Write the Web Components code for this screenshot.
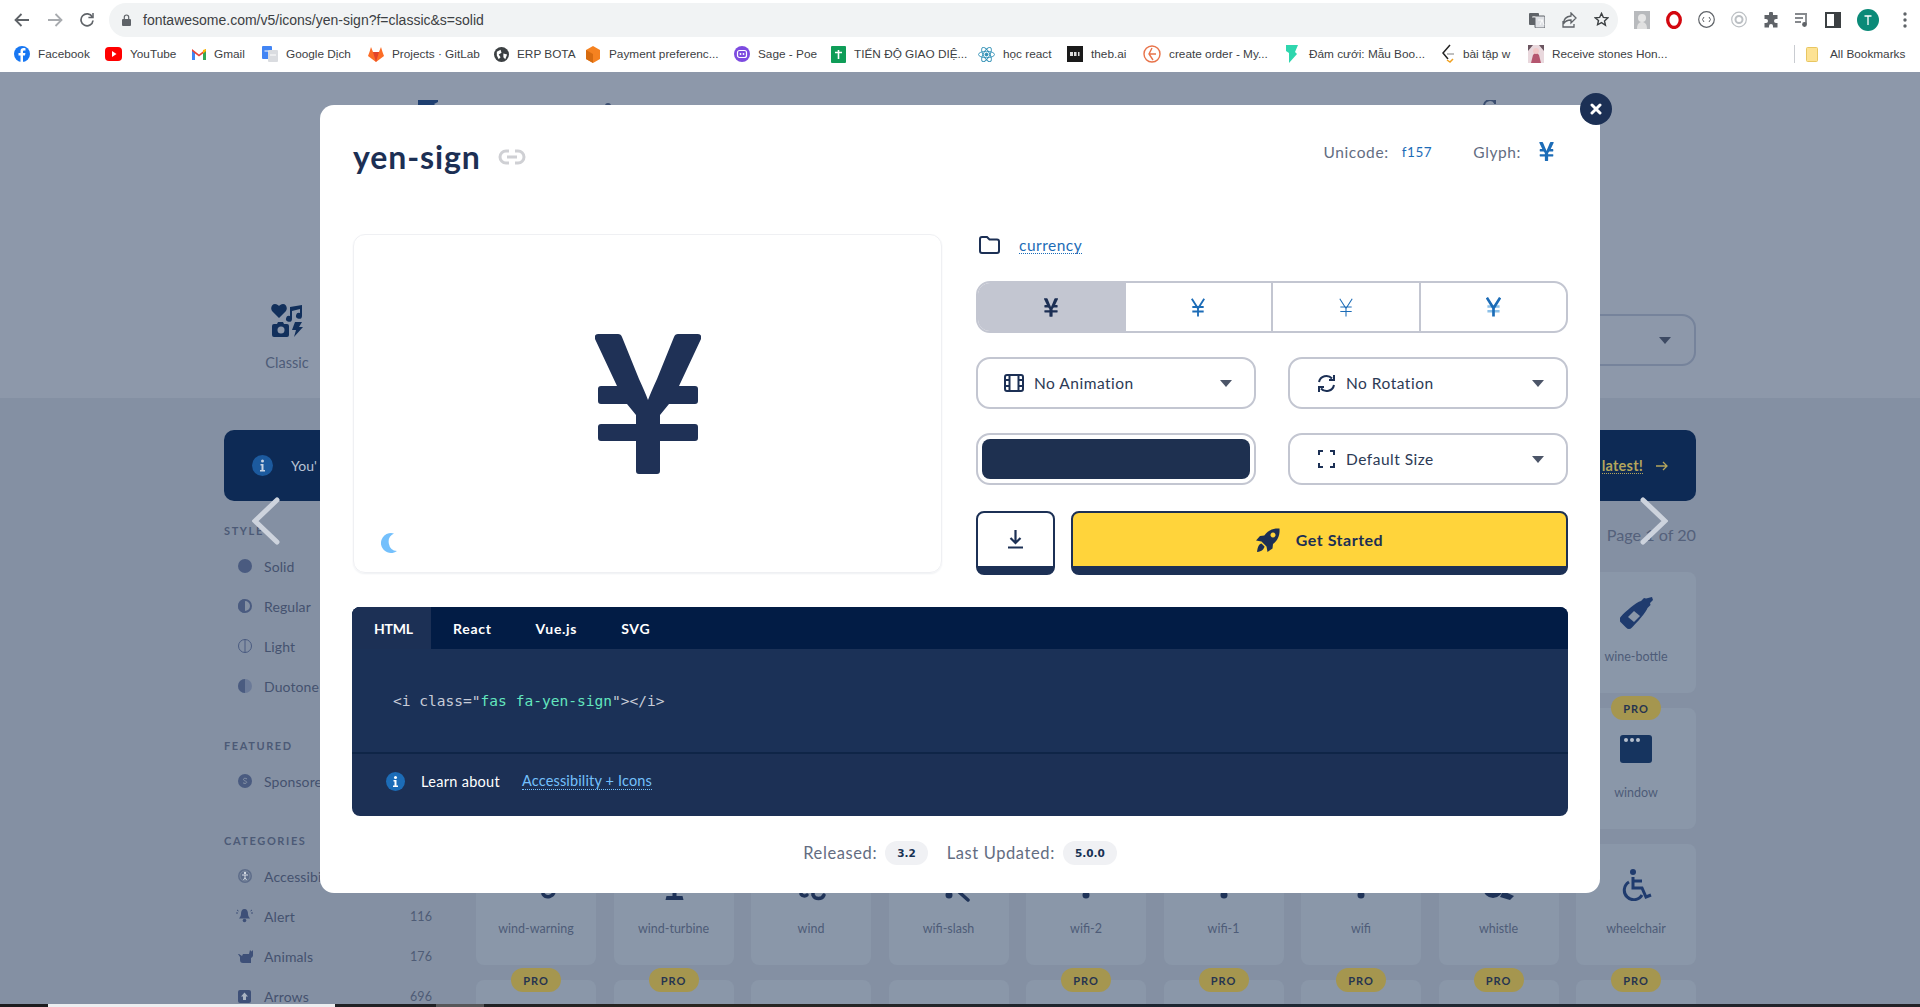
<!DOCTYPE html>
<html lang="en">
<head>
<meta charset="utf-8">
<title>yen-sign</title>
<style>
html,body{margin:0;height:100%;overflow:hidden;background:#8490a3}
body{display:flex;flex-direction:column;height:1007px;font-family:Lato,"Noto Sans",sans-serif}
</style>
</head>
<body>
<chrome-bar></chrome-bar>
<fa-page></fa-page>
<task-strip></task-strip>
<script>
const def=(name,html)=>customElements.define(name,class extends HTMLElement{
  constructor(){super();this.attachShadow({mode:'open'}).innerHTML=typeof html==='function'?html(this):html;}
});
const YEN='M3 0H23Q26 0 27 3L44 45Q50 58 53 66Q56 58 62 45L79 3Q80 0 83 0H103Q107 0 106 5L84 52H100Q103 52 103 55V67Q103 70 100 70H74L65 81V90H100Q103 90 103 93V104Q103 107 100 107H65V137Q65 140 62 140H44Q41 140 41 137V107H6Q3 107 3 104V93Q3 90 6 90H41V81L32 70H6Q3 70 3 67V55Q3 52 6 52H22L0 5Q-1 0 3 0Z';
const yenSolid=(w,h,c)=>`<svg width="${w}" height="${h}" viewBox="0 0 106 140" fill="${c}"><path d="${YEN}"/></svg>`;
const yenLine=(w,h,c,s)=>`<svg width="${w}" height="${h}" viewBox="0 0 106 140" fill="none" stroke="${c}" stroke-width="${s}"><path d="M6 4L53 78L100 4M10 66H96M10 100H96M53 78V138"/></svg>`;

/* ---------- browser chrome ---------- */
def('bm-item',`<style>:host{display:flex;align-items:center;flex:none;gap:8px;font:11.8px "Liberation Sans",Arial,sans-serif;color:#3c4043;white-space:nowrap}
::slotted(svg){flex:none}</style><slot name="i"></slot><slot></slot>`);

def('chrome-bar',`<style>
:host{display:block;flex:none;height:72px;background:#fff;box-sizing:border-box}
.top{display:flex;align-items:center;height:39px;padding-left:14px}
.nav{display:flex;align-items:center;gap:17px;width:95px;flex:none}
.omni{flex:none;width:1509px;height:34px;background:#f1f3f4;border-radius:17px;display:flex;align-items:center;padding-left:13px;box-sizing:border-box;font:14px "Liberation Sans",Arial,sans-serif;color:#3c4043;gap:12px}
.omni .end{margin-left:auto;display:flex;gap:17px;padding-right:9px;align-items:center}
.exts{display:flex;align-items:center;margin-left:16px;gap:16px}
.marks{display:flex;align-items:center;height:30px;padding-left:14px}
.sep{width:1px;height:18px;background:#c9ccd1;margin-right:11px;flex:none}
</style>
<div class="top">
 <div class="nav">
  <svg width="16" height="14" viewBox="0 0 16 14" fill="none" stroke="#5f6368" stroke-width="1.8"><path d="M15 7H2M7.5 1L1.5 7l6 6"/></svg>
  <svg width="16" height="14" viewBox="0 0 16 14" fill="none" stroke="#a8abaf" stroke-width="1.8"><path d="M1 7h13M8.5 1l6 6-6 6"/></svg>
  <svg width="14" height="15" viewBox="0 0 14 15" fill="none" stroke="#5f6368" stroke-width="1.7"><path d="M12.3 5A6 6 0 1 0 13 8.5"/><path d="M13 1v4.6H8.4" stroke-width="1.5"/></svg>
 </div>
 <div class="omni">
  <svg width="9" height="12" viewBox="0 0 9 12"><path d="M1 5h7a1 1 0 0 1 1 1v5a1 1 0 0 1-1 1H1a1 1 0 0 1-1-1V6a1 1 0 0 1 1-1z" fill="#5f6368"/><path d="M2.3 5V3.2a2.2 2.2 0 0 1 4.4 0V5" fill="none" stroke="#5f6368" stroke-width="1.2"/></svg>
  <span>fontawesome.com/v5/icons/yen-sign?f=classic&amp;s=solid</span>
  <div class="end">
   <svg width="16" height="16" viewBox="0 0 16 16"><rect x="0" y="1" width="10" height="12" rx="1" fill="#5f6368"/><rect x="6" y="4" width="10" height="12" rx="1" fill="#dfe1e5" stroke="#5f6368"/><path d="M3 5h4M5 4v1M9 8h5M11 13l2-5 2 5" stroke="#fff" fill="none" stroke-width=".8"/></svg>
   <svg width="15" height="16" viewBox="0 0 15 16" fill="none" stroke="#5f6368" stroke-width="1.3"><path d="M9 1l5 5-5 5V8C6 8 3 9 1.500 12 1.500 8 4 4.500 9 4zM1 9v6h11v-3"/></svg>
   <svg width="15" height="15" viewBox="0 0 16 16" fill="none" stroke="#3c4043" stroke-width="1.5"><path d="M8 1.500l2 4.300 4.700.5-3.500 3.200 1 4.600L8 11.300l-4.200 2.300 1-4.600L1.300 6.300 6 5.800z"/></svg>
  </div>
 </div>
 <div class="exts">
  <svg width="16" height="18" viewBox="0 0 16 18"><rect width="16" height="18" fill="#b8babd"/><circle cx="8" cy="7" r="4" fill="#e6e6e6"/><path d="M3 18c0-5 2-7 5-7s5 2 5 7z" fill="#e0e0e0"/></svg>
  <svg width="16" height="18" viewBox="0 0 16 18"><ellipse cx="8" cy="9" rx="6.300" ry="7.500" fill="none" stroke="#d3070f" stroke-width="3.300"/></svg>
  <svg width="17" height="17" viewBox="0 0 17 17" fill="none" stroke="#5f6368"><circle cx="8.500" cy="8.500" r="7.800" stroke-width="1.200"/><path d="M6 6L4.500 8.500 6 11M11 6l1.500 2.500L11 11"/></svg>
  <svg width="16" height="17" viewBox="0 0 16 17" fill="none" stroke="#bcc0c4"><circle cx="8" cy="8.500" r="7.300" stroke-width="1.200"/><circle cx="8" cy="8.500" r="3.500" stroke-width="2"/></svg>
  <svg width="16" height="16" viewBox="0 0 16 16" fill="#5f6368"><path d="M6 1.500a2 2 0 0 1 4 0V3h4.500v4H13a2 2 0 0 0 0 4h1.500v4.500H10V14a2 2 0 0 0-4 0v1.500H1.500V11H3a2 2 0 0 0 0-4H1.500V3H6z"/></svg>
  <svg width="14" height="15" viewBox="0 0 14 15" fill="none" stroke="#5f6368" stroke-width="1.400"><path d="M0 2h12M0 6h8M0 10h6"/><path d="M11 3v9"/><circle cx="9.500" cy="12.500" r="1.700" fill="#5f6368"/></svg>
  <svg width="16" height="16" viewBox="0 0 16 16"><rect x="1" y="1" width="14" height="14" fill="none" stroke="#3c4043" stroke-width="2"/><rect x="9" y="1" width="6" height="14" fill="#3c4043"/></svg>
  <svg width="22" height="22" viewBox="0 0 22 22"><circle cx="11" cy="11" r="11" fill="#0b8a78"/><path d="M7.500 7h7M11 7v9" stroke="#fff" stroke-width="1.300"/></svg>
  <svg width="4" height="16" viewBox="0 0 4 16" fill="#5f6368" style="margin-left:8px"><circle cx="2" cy="2" r="1.700"/><circle cx="2" cy="8" r="1.700"/><circle cx="2" cy="14" r="1.700"/></svg>
 </div>
</div>
<div class="marks">
 <bm-item style="width:91px"><svg slot="i" width="16" height="16" viewBox="0 0 16 16"><circle cx="8" cy="8" r="8" fill="#1877f2"/><path d="M9 16V9.500h2l.4-2.400H9V5.700c0-.8.300-1.200 1.300-1.200h1.200V2.300C11 2.200 10.300 2.100 9.600 2.100 7.600 2.100 6.500 3.200 6.500 5.300v1.800H4.500v2.400h2V16z" fill="#fff"/></svg>Facebook</bm-item>
 <bm-item style="width:87px"><svg slot="i" width="17" height="14" viewBox="0 0 17 14"><rect width="17" height="14" rx="4" fill="#f00"/><path d="M7 4l4.500 3L7 10z" fill="#fff"/></svg>YouTube</bm-item>
 <bm-item style="width:70px"><svg slot="i" width="14" height="12" viewBox="0 0 14 12"><path d="M0 1l7 5.500L14 1v11h-3V5.500L7 8.500 3 5.500V12H0z" fill="#ea4335"/><path d="M0 3v9h3V5.500z" fill="#4285f4"/><path d="M14 3v9h-3V5.500z" fill="#34a853"/><path d="M11 2v3.500l3-2.500V1z" fill="#fbbc04"/></svg>Gmail</bm-item>
 <bm-item style="width:106px"><svg slot="i" width="16" height="16" viewBox="0 0 16 16"><rect width="10" height="13" rx="1" fill="#4285f4"/><rect x="6" y="4" width="10" height="12" rx="1" fill="#dadce0"/><path d="M2.500 5h4M8 9h6" stroke="#fff" stroke-width="1"/></svg>Google Dịch</bm-item>
 <bm-item style="width:126px"><svg slot="i" width="16" height="15" viewBox="0 0 16 15"><path d="M8 15L0 9l1.500-4L3 0l2 5h6l2-5 1.500 5L16 9z" fill="#fc6d26"/><path d="M8 15L5 5h6z" fill="#e24329"/></svg>Projects · GitLab</bm-item>
 <bm-item style="width:91px"><svg slot="i" width="15" height="15" viewBox="0 0 16 16"><circle cx="8" cy="8" r="8" fill="#3c4043"/><path d="M3 5l4-2 1 3-3 2 2 3-2 2-2-4zM10 7l4 1-2 5-2-2z" fill="#fff"/></svg>ERP BOTA</bm-item>
 <bm-item style="width:149px"><svg slot="i" width="16" height="17" viewBox="0 0 16 17"><path d="M8 0l7 4v9l-7 4-7-4V4z" fill="#f58220"/><path d="M8 8v9l-7-4V4z" fill="#d66b10"/></svg>Payment preferenc...</bm-item>
 <bm-item style="width:97px"><svg slot="i" width="16" height="16" viewBox="0 0 16 16"><circle cx="8" cy="8" r="8" fill="#7d4be0"/><rect x="3.500" y="4.500" width="9" height="7" rx="2" fill="none" stroke="#fff" stroke-width="1.200"/><circle cx="6.500" cy="8" r=".9" fill="#fff"/><circle cx="9.500" cy="8" r=".9" fill="#fff"/></svg>Sage - Poe</bm-item>
 <bm-item style="width:147px"><svg slot="i" width="15" height="17" viewBox="0 0 15 17"><rect width="15" height="17" rx="1" fill="#0f9d58"/><path d="M7.500 4v9M4 6.500h7" stroke="#fff" stroke-width="1.600"/></svg>TIẾN ĐỘ GIAO DIỆ...</bm-item>
 <bm-item style="width:89px"><svg slot="i" width="17" height="17" viewBox="0 0 17 17" fill="none" stroke="#2f8fb5" stroke-width=".9"><ellipse cx="8.500" cy="8.500" rx="8" ry="3.200"/><ellipse cx="8.500" cy="8.500" rx="8" ry="3.200" transform="rotate(60 8.500 8.500)"/><ellipse cx="8.500" cy="8.500" rx="8" ry="3.200" transform="rotate(120 8.500 8.500)"/><circle cx="8.500" cy="8.500" r="1.500" fill="#2f8fb5"/></svg>học react</bm-item>
 <bm-item style="width:76px"><svg slot="i" width="16" height="16" viewBox="0 0 16 16"><rect width="16" height="16" fill="#1a1a1a"/><rect x="3" y="6" width="3" height="4" fill="#ddd"/><rect x="7" y="6" width="2.500" height="4" fill="#ddd"/><rect x="11" y="6" width="1.500" height="4" fill="#ddd"/></svg>theb.ai</bm-item>
 <bm-item style="width:143px"><svg slot="i" width="18" height="18" viewBox="0 0 18 18" fill="none" stroke="#e8734a" stroke-width="1.400"><circle cx="9" cy="9" r="8"/><path d="M9 3l-3 6 4 6M6 9h7"/></svg>create order - My...</bm-item>
 <bm-item style="width:155px;gap:11px"><svg slot="i" width="12" height="18" viewBox="0 0 12 18"><path d="M0 0h12L9 7l2 2-8 9V8L0 6z" fill="#2fd6ae"/></svg>Đám cưới: Mẫu Boo...</bm-item>
 <bm-item style="width:87px"><svg slot="i" width="14" height="20" viewBox="0 0 14 20" fill="none" stroke-width="1.500"><path d="M9 1L2 9l5 6" stroke="#222"/><path d="M6 16l3 2 3-3" stroke="#f0a020"/><path d="M6 10h7" stroke="#aaa"/></svg>bài tập w</bm-item>
 <bm-item style="width:266px"><svg slot="i" width="16" height="18" viewBox="0 0 16 18"><rect width="16" height="18" fill="#e9d8dd"/><path d="M3 18l2-8 3-3 3 3 2 8z" fill="#b5566f"/><circle cx="8" cy="6" r="3" fill="#f1c8c8"/><path d="M0 0h5L0 6zM16 0h-5l5 6z" fill="#6b5560"/></svg>Receive stones Hon...</bm-item>
 <span class="sep"></span>
 <bm-item style="gap:12px"><svg slot="i" width="12" height="15" viewBox="0 0 12 15"><rect x=".5" y=".5" width="11" height="14" rx="1" fill="#fde293" stroke="#e8c662"/></svg>All Bookmarks</bm-item>
</div>`);

/* ---------- page behind the dialog ---------- */
def('side-item',el=>`<style>
:host{display:flex;align-items:center;height:40px;padding-left:14px;font-size:14px;color:#44526f;letter-spacing:.1px;white-space:nowrap}
.i{width:26px;display:flex;flex:none}
.n{margin-left:auto;font-size:12.500px;color:#4f5c76}
</style><span class="i"><slot name="i"></slot></span><slot></slot><span class="n">${el.getAttribute('count')||''}</span>`);

def('icon-card',el=>`<style>
:host{display:block;position:relative;height:121px;background:#8a97a9;border-radius:8px;font-size:12.5px;color:#4e5c78}
.ic{display:flex;justify-content:center;padding-top:25px;height:33px}
.nm{text-align:center;margin-top:18px;line-height:18px}
.pro{position:absolute;left:35px;top:-12px;width:50px;height:24px;border-radius:12px;background:#a5964f;color:#26344f;font-size:11px;font-weight:700;letter-spacing:1px;display:flex;align-items:center;justify-content:center}
</style>${el.hasAttribute('pro')?'<span class="pro">PRO</span>':''}<div class="ic"><slot name="i"></slot></div><div class="nm"><slot></slot></div>`);

def('fa-page',`<style>
:host{display:block;position:relative;flex:1;min-height:0;overflow:hidden;background:#8490a3}
.hero{height:326px;background:#8d98aa;box-sizing:border-box;padding:28px 224px 0;position:relative}
.peeks{display:flex;height:8px;align-items:flex-start}
.hrow{display:flex;justify-content:space-between;align-items:flex-start;margin-top:196px}
.classic{margin-left:40px;width:46px;font-size:14.500px;color:#4e5c78;display:flex;flex-direction:column;align-items:center;gap:17px}
.dd{width:400px;height:52px;box-sizing:border-box;border:2px solid #76839b;border-radius:14px;margin-top:10px;display:flex;align-items:center;justify-content:flex-end;padding-right:23px}
.body{padding:32px 224px 0;}
.banner{height:71px;background:#0d2a55;border-radius:10px;display:flex;align-items:center;padding:0 28px;font-size:14px;color:#b8c3d4;gap:18px}
.go{margin-left:auto;color:#b4a55c;font-weight:700;font-size:14.500px;letter-spacing:.2px;border-bottom:1px dotted #b4a55c;line-height:15px;margin-right:-5px}
.cols{display:grid;grid-template-columns:252px 1fr;margin-top:20px}
.gh{height:20px;line-height:20px;margin-bottom:5px;font-size:11px;font-weight:700;letter-spacing:1.600px;color:#4c5a76}
.group{width:208px;margin-bottom:30px}
.pg{text-align:right;height:20px;line-height:20px;margin:4px 0 27px;font-size:16.200px;color:#54617b}
.grid{display:grid;grid-template-columns:repeat(9,120px);column-gap:17.500px;row-gap:15px}
.chev{position:absolute;top:425px}
</style>
<section class="hero">
 <div class="peeks">
  <svg style="margin-left:193px" width="22" height="8" viewBox="0 0 22 8"><path d="M1 0h20v2l-4 2 4 4H1z" fill="#1f3f70"/></svg>
  <svg style="margin-left:165px" width="8" height="8" viewBox="0 0 8 8"><circle cx="4" cy="6" r="3" fill="#3b4e70"/></svg>
  <svg style="margin-left:871px" width="14" height="8" viewBox="0 0 14 8" fill="none" stroke="#3b4e70" stroke-width="2"><path d="M1 5a6 6 0 0 1 11-2M12 0v4"/></svg>
 </div>
 <div class="hrow">
  <div class="classic">
   <svg width="32" height="33" viewBox="0 0 32 33" fill="#12305c"><path d="M8 14L1 7C-1 4 1 0 4 0c2 0 3 1 4 2 1-1 2-2 4-2 3 0 5 4 3 7z"/><path d="M31 1v11a3 3 0 1 1-2-3V5l-8 2v8a3 3 0 1 1-2-3V3z"/><path d="M3 20h3l1-2h5l1 2h3a2 2 0 0 1 2 2v9a2 2 0 0 1-2 2H3a2 2 0 0 1-2-2v-9a2 2 0 0 1 2-2z"/><path d="M24 18h7l-3 5h4l-9 10 2-7h-4z"/><circle cx="10" cy="26" r="3.500" fill="#8d98aa"/></svg>
   <span>Classic</span>
  </div>
  <div class="dd"><svg width="12" height="7" viewBox="0 0 12 7"><path d="M0 0h12L6 7z" fill="#3d4a63"/></svg></div>
 </div>
</section>
<section class="body">
 <div class="banner">
  <svg width="21" height="21" viewBox="0 0 21 21"><circle cx="10.500" cy="10.500" r="10.500" fill="#1c5a9e"/><circle cx="10.500" cy="6" r="1.500" fill="#c7d3e3"/><path d="M8.500 9h3v6h1.500v1.500H8V15h1.500v-4.500h-1z" fill="#c7d3e3"/></svg>
  <span>You'</span>
  <span class="go">latest!</span>
  <svg width="12" height="10" viewBox="0 0 12 10" fill="none" stroke="#b4a55c" stroke-width="1.300"><path d="M0 5h11M7 1l4 4-4 4"/></svg>
 </div>
 <div class="cols">
  <aside>
   <div class="group"><div class="gh">STYLE</div>
    <side-item><svg slot="i" width="14" height="14" viewBox="0 0 14 14"><circle cx="7" cy="7" r="7" fill="#4a5b80"/></svg>Solid</side-item>
    <side-item><svg slot="i" width="14" height="14" viewBox="0 0 14 14"><circle cx="7" cy="7" r="6" fill="none" stroke="#4a5b80" stroke-width="2"/><path d="M7 0a7 7 0 0 0 0 14z" fill="#4a5b80"/></svg>Regular</side-item>
    <side-item><svg slot="i" width="14" height="14" viewBox="0 0 14 14" fill="none" stroke="#4a5b80"><circle cx="7" cy="7" r="6.500"/><path d="M7 0v14"/></svg>Light</side-item>
    <side-item><svg slot="i" width="14" height="14" viewBox="0 0 14 14"><circle cx="7" cy="7" r="7" fill="#6b7a98"/><path d="M7 0a7 7 0 0 0 0 14z" fill="#4a5b80"/></svg>Duotone</side-item>
   </div>
   <div class="group"><div class="gh">FEATURED</div>
    <side-item><svg slot="i" width="14" height="14" viewBox="0 0 14 14"><circle cx="7" cy="7" r="7" fill="#4a5b80"/><path d="M9 5c-2-1.500-4-.5-3.500.8C6 7 9 7 8.700 8.500 8.300 9.800 6 9.500 5 8.800" stroke="#8592a6" fill="none"/></svg>Sponsored</side-item>
   </div>
   <div class="group"><div class="gh">CATEGORIES</div>
    <side-item><svg slot="i" width="14" height="14" viewBox="0 0 14 14"><circle cx="7" cy="7" r="7" fill="#5e6d8a"/><circle cx="7" cy="7" r="5" fill="none" stroke="#8490a3" stroke-width=".8"/><circle cx="7" cy="4" r="1.200" fill="#d6dbe3"/><path d="M4 6h6M7 6v2.500L5.500 11M7 8.500l1.500 2.500" stroke="#d6dbe3" fill="none"/></svg>Accessibility</side-item>
    <side-item count="116"><svg slot="i" width="17" height="14" viewBox="0 0 17 14" style="margin-left:-2px"><path d="M8.500 0c2.500 0 3.500 2 3.500 5 0 2 1 3 2 4.500H3c1-1.500 2-2.500 2-4.500 0-3 1-5 3.500-5z" fill="#3e5078"/><circle cx="8.500" cy="11.500" r="1.800" fill="#3e5078"/><path d="M0 4h2M15 4h2M1 1l1.500 1M16 1l-1.500 1" stroke="#3e5078"/></svg>Alert</side-item>
    <side-item count="176"><svg slot="i" width="15" height="13" viewBox="0 0 15 13" fill="#3e5078"><path d="M5 4h6l1-4 1.500 1.500L15 0v5a3 3 0 0 1-2 3v5H5c-2 0-3-1-3-3V7L0 4h1l3 2z"/></svg>Animals</side-item>
    <side-item count="696"><svg slot="i" width="13" height="13" viewBox="0 0 13 13"><rect width="13" height="13" rx="2" fill="#3e5078"/><path d="M6.500 2.500L10 6.500H8V10H5V6.500H3z" fill="#a9b3c2"/></svg>Arrows</side-item>
   </div>
  </aside>
  <main>
   <div class="pg">Page 1 of 20</div>
   <div class="grid">
    <icon-card></icon-card><icon-card></icon-card><icon-card></icon-card><icon-card></icon-card><icon-card></icon-card><icon-card></icon-card><icon-card></icon-card><icon-card></icon-card>
    <icon-card><svg slot="i" width="33" height="33" viewBox="0 0 33 33"><path d="M32 0l1 3-3 3 .5 2-3 3c-1 4-11 15-15.500 19.500-2 2-4 2-6 0l-5-5c-2-2-2-4 0-6C5 15 16 5 21 4l3-3 2 .5z" fill="#1f3b6e"/><path d="M8 20l6-6 6 5-6 6z" fill="#8a97a9"/></svg>wine-bottle</icon-card>
    <icon-card></icon-card><icon-card></icon-card><icon-card></icon-card><icon-card></icon-card><icon-card></icon-card><icon-card></icon-card><icon-card></icon-card><icon-card></icon-card>
    <icon-card pro><svg slot="i" width="32" height="28" viewBox="0 0 32 28" style="margin-top:2px"><rect width="32" height="28" rx="3" fill="#16345f"/><circle cx="6" cy="5" r="2" fill="#b5bfcd"/><circle cx="12" cy="5" r="2" fill="#b5bfcd"/><circle cx="18" cy="5" r="2" fill="#b5bfcd"/></svg>window</icon-card>
    <icon-card>wind-warning<svg slot="i" width="60" height="33" viewBox="0 0 60 33" fill="none" stroke="#1f3358" stroke-width="3.500" stroke-linecap="round"><path d="M48 4V22a6 6 0 0 1-11 3"/></svg></icon-card>
    <icon-card>wind-turbine<svg slot="i" width="60" height="33" viewBox="0 0 60 33" fill="#1f3358"><path d="M28.500 8h4v19h6l1 4h-18l1-4h6z"/></svg></icon-card>
    <icon-card>wind<svg slot="i" width="60" height="33" viewBox="0 0 60 33" fill="none" stroke="#1f3358" stroke-width="3.500" stroke-linecap="round"><path d="M20 25a4 4 0 0 0 6 1M32 16v10a6 6 0 0 0 11 0"/></svg></icon-card>
    <icon-card>wifi-slash<svg slot="i" width="60" height="33" viewBox="0 0 60 33"><circle cx="30" cy="26" r="3.500" fill="#1f3358"/><path d="M30 14L49 31" stroke="#1f3358" stroke-width="3.500" stroke-linecap="round"/></svg></icon-card>
    <icon-card>wifi-2<svg slot="i" width="60" height="33" viewBox="0 0 60 33"><circle cx="30" cy="26" r="3.500" fill="#1f3358"/></svg></icon-card>
    <icon-card>wifi-1<svg slot="i" width="60" height="33" viewBox="0 0 60 33"><circle cx="30" cy="26" r="3.500" fill="#1f3358"/></svg></icon-card>
    <icon-card>wifi<svg slot="i" width="60" height="33" viewBox="0 0 60 33"><circle cx="30" cy="26" r="3.500" fill="#1f3358"/></svg></icon-card>
    <icon-card>whistle<svg slot="i" width="60" height="33" viewBox="0 0 60 33" fill="#1f3358"><circle cx="24" cy="19" r="10"/><path d="M34 22l11 5-4 4-10-3z"/></svg></icon-card>
    <icon-card>wheelchair<svg slot="i" width="33" height="32" viewBox="0 0 33 32" fill="none" stroke="#1f3b6e" stroke-width="3"><circle cx="13" cy="3" r="3" fill="#1f3b6e" stroke="none"/><path d="M13 8v11h9l4 9 5-2"/><path d="M13 12h9"/><path d="M9 13a9.500 9.500 0 1 0 13 13"/></svg></icon-card>
    <icon-card pro></icon-card><icon-card pro></icon-card><icon-card></icon-card><icon-card></icon-card><icon-card pro></icon-card><icon-card pro></icon-card><icon-card pro></icon-card><icon-card pro></icon-card><icon-card pro></icon-card>
   </div>
  </main>
 </div>
</section>
<svg class="chev" style="left:252px" width="28" height="48" viewBox="0 0 28 48" fill="none" stroke="#cdd3dd" stroke-width="5" stroke-linecap="round"><path d="M25 3L3 24l22 21"/></svg>
<svg class="chev" style="left:1640px" width="28" height="48" viewBox="0 0 28 48" fill="none" stroke="#cdd3dd" stroke-width="5" stroke-linecap="round"><path d="M3 3l22 21L3 45"/></svg>
<icon-modal></icon-modal>`);

/* ---------- dialog ---------- */
def('sel-box',el=>`<style>
:host{display:flex;align-items:center;height:52px;box-sizing:border-box;border:2px solid #c3c6d1;border-radius:14px;padding:0 22px 0 25px;font-size:15.500px;letter-spacing:.5px;color:#2c3a55}
.i{width:22px;height:20px;display:flex;align-items:center;justify-content:center;margin-right:9px;flex:none}
.c{margin-left:auto}
</style><span class="i"><slot name="i"></slot></span><slot></slot>
<svg class="c" width="12" height="7" viewBox="0 0 12 7"><path d="M0 0h12L6 7z" fill="#4c5568"/></svg>`);

def('seg-cell',`<style>
:host{flex:1;display:flex;align-items:center;justify-content:center;border-left:2px solid #c3c6d1;box-sizing:border-box}
:host([on]){background:#c3c6d1;border-left:0}
</style><slot></slot>`);

def('meta-pill',`<style>:host{display:inline-flex;align-items:center;height:24px;padding:0 12px;border-radius:12px;background:#f0f1f4;font:700 10.500px "DejaVu Sans",sans-serif;color:#183153;margin:0 19px 0 8px;letter-spacing:0}</style><slot></slot>`);

def('code-panel',`<style>
:host{display:block;height:209px;border-radius:8px;overflow:hidden;background:#1c3055;color:#fff;margin-top:32px}
.tabs{display:flex;height:42px;background:#021c45;font-size:14px;font-weight:700;letter-spacing:.7px;color:#fff}
.tabs span{display:flex;align-items:center;padding:0 22px;box-sizing:border-box}
.tabs .on{background:#1c3055;width:79px;letter-spacing:-.2px}
.code{height:103px;box-sizing:border-box;padding-left:41px;display:flex;align-items:center;font:14.550px "DejaVu Sans Mono",monospace;color:#c7ccd8;background:#1b3157;white-space:pre}
.code b{font-weight:400;color:#63e6be}
.foot{border-top:2px solid #0f2547;height:62px;box-sizing:border-box;padding:19px 0 0 34px;display:flex;align-items:flex-start;font-size:14.500px;letter-spacing:.3px}
.foot svg{margin:-1px 16px 0 0;flex:none}
.foot a{margin-left:22px;color:#74c0fc;border-bottom:1px dotted #74c0fc;line-height:16px;letter-spacing:.15px}
.foot span{line-height:18px}
</style>
<div class="tabs"><span class="on">HTML</span><span>React</span><span>Vue.js</span><span>SVG</span></div>
<div class="code">&lt;i class="<b>fas fa-yen-sign</b>"&gt;&lt;/i&gt;</div>
<div class="foot">
 <svg width="19" height="19" viewBox="0 0 19 19"><circle cx="9.500" cy="9.500" r="9.500" fill="#1c6cb7"/><circle cx="9.500" cy="5.500" r="1.500" fill="#fff"/><path d="M7.500 8h3v5.500H12V15H7v-1.500h1.500v-4h-1z" fill="#fff"/></svg>
 <span>Learn about</span><a>Accessibility + Icons</a>
</div>`);

def('icon-modal',`<style>
:host{position:absolute;left:320px;top:33px;width:1280px;height:788px;box-sizing:border-box;background:#fff;border-radius:14px;padding:32px 32px 0 32px;color:#183153;display:block}
.head{display:flex;justify-content:space-between;height:97px;margin-left:1px}
.title{display:flex;align-items:center;height:38px;font-size:32px;font-weight:700;color:#1c2f54;letter-spacing:.9px}
.title svg{margin-left:17px;margin-top:2px}
.uni{display:flex;align-items:center;height:30px;padding-right:14px;font-size:15.500px;letter-spacing:.6px;color:#636d82}
.uni b{font-weight:400;color:#1c6cb7;margin:0 41px 0 13px;font-size:13.500px}
.uni svg{margin-left:18px;margin-top:-1px}
.main{display:flex;gap:34px;margin-left:1px}
.prev{flex:none;width:589px;height:339px;box-sizing:border-box;border:1px solid #eff0f3;border-radius:12px;box-shadow:0 1px 2px #eef0f3;position:relative;display:flex;align-items:center;justify-content:center}
.prev .y{display:flex}
.moon{position:absolute;left:27px;bottom:18px}
.ctl{flex:1;min-width:0}
.cat{display:flex;align-items:center;height:22px;margin-bottom:25px;padding-left:3px}
.cat a{margin-left:19px;font-size:15.500px;letter-spacing:.5px;color:#1c6cb7;border-bottom:1px dotted #1c6cb7;line-height:16px}
.seg{display:flex;height:52px;box-sizing:border-box;border:2px solid #c3c6d1;border-radius:14px;overflow:hidden;margin-bottom:24px}
.two{display:grid;grid-template-columns:280px 280px;column-gap:32px;row-gap:24px;margin-bottom:26px}
.swatch{height:52px;box-sizing:border-box;border:2px solid #c3c6d1;border-radius:14px;padding:4px}
.swatch i{display:block;height:100%;background:#1e3050;border-radius:8px}
.acts{display:flex;gap:16px;height:64px}
.dl{width:79px;box-sizing:border-box;border:2px solid #1c3055;border-bottom-width:9px;border-radius:8px;display:flex;align-items:center;justify-content:center;background:#fff}
.go{flex:1;box-sizing:border-box;border:2px solid #1c3055;border-bottom-width:9px;border-radius:8px;background:#ffd43b;display:flex;align-items:center;justify-content:center;gap:16px;font-size:16px;font-weight:700;letter-spacing:.5px;color:#1c2f54}
.meta{display:flex;justify-content:center;align-items:center;margin-top:25px;height:24px;font-size:16.500px;color:#636d82;letter-spacing:.6px}
.meta meta-pill:last-child{margin-right:0}
.x{position:absolute;left:1260px;top:-12px;width:32px;height:32px;border-radius:50%;background:#1c3055;display:flex;align-items:center;justify-content:center}
</style>
<div class="x"><svg width="12" height="12" viewBox="0 0 12 12" stroke="#fff" stroke-width="3" stroke-linecap="round"><path d="M2 2l8 8M10 2l-8 8"/></svg></div>
<div class="head">
 <div class="title">yen-sign<svg width="28" height="16" viewBox="0 0 28 16" fill="none" stroke="#cfd0d4" stroke-width="3"><path d="M11 2H8a6 6 0 0 0 0 12h3M17 2h3a6 6 0 0 1 0 12h-3M9 8h10"/></svg></div>
 <div class="uni">Unicode:<b>f157</b>Glyph:<span style="display:flex">${yenSolid(15,19,'#1c6cb7')}</span></div>
</div>
<div class="main">
 <div class="prev">
  <span class="y">${yenSolid(106,140,'#1f3156')}</span>
  <svg class="moon" width="18" height="21" viewBox="0 0 18 21"><path d="M13 .5A10 10 0 1 0 16 18 9.200 9.200 0 0 1 13 .5z" fill="#74c0fc"/></svg>
 </div>
 <div class="ctl">
  <div class="cat"><svg width="21" height="18" viewBox="0 0 21 18" fill="none" stroke="#1c3055" stroke-width="2"><path d="M3 1h5l2.500 2.500H18a2 2 0 0 1 2 2V15a2 2 0 0 1-2 2H3a2 2 0 0 1-2-2V3a2 2 0 0 1 2-2z"/></svg><a>currency</a></div>
  <div class="seg">
   <seg-cell on>${yenSolid(14,19,'#1c2f54')}</seg-cell>
   <seg-cell>${yenLine(14,19,'#1c6cb7',14)}</seg-cell>
   <seg-cell>${yenLine(14,19,'#1c6cb7',8)}</seg-cell>
   <seg-cell><svg width="15" height="20" viewBox="0 0 106 140" fill="none"><path d="M10 66H96M10 100H96" stroke="#8cc0e8" stroke-width="17"/><path d="M6 4L53 78L100 4M53 78V138" stroke="#1c6cb7" stroke-width="19"/></svg></seg-cell>
  </div>
  <div class="two">
   <sel-box><svg slot="i" width="20" height="18" viewBox="0 0 20 18" fill="none" stroke="#1c3055" stroke-width="2"><rect x="1" y="1" width="18" height="16" rx="2"/><path d="M5.500 1v16M14.500 1v16M1 6h4M1 12h4M15 6h4M15 12h4"/></svg>No Animation</sel-box>
   <sel-box><svg slot="i" width="19" height="19" viewBox="0 0 19 19" fill="none" stroke="#1c3055" stroke-width="2"><path d="M2 8a7.500 7.500 0 0 1 13-3.500M17 11a7.500 7.500 0 0 1-13 3.500"/><path d="M17 1v5h-5M2 18v-5h5"/></svg>No Rotation</sel-box>
   <div class="swatch"><i></i></div>
   <sel-box><svg slot="i" width="17" height="18" viewBox="0 0 17 18" fill="none" stroke="#1c3055" stroke-width="2"><path d="M1 5V1h4M12 1h4v4M16 13v4h-4M5 17H1v-4"/></svg>Default Size</sel-box>
  </div>
  <div class="acts">
   <div class="dl"><svg width="15" height="19" viewBox="0 0 15 19" fill="none" stroke="#1c3055" stroke-width="2.200"><path d="M7.500 0v12M2.500 8l5 5 5-5M0 17.500h15"/></svg></div>
   <div class="go"><svg width="24" height="24" viewBox="0 0 24 24" fill="#1c2f54" fill-rule="evenodd"><path d="M23.500 0.500C24 7 22 12 17 16l-.5 4.500L11.500 24l-1-5.500-5-5L0 12.500 4 8l4.300-.5C12 2.500 17 0 23.500 0.500zM17 4.500a2.500 2.500 0 1 0 .01 0z"/><path d="M5.500 15.500l3 3C8 21 6 23.500 1 24c.5-5 2-8 4.500-8.500z"/></svg>Get Started</div>
  </div>
 </div>
</div>
<code-panel></code-panel>
<div class="meta">Released:<meta-pill>3.2</meta-pill>Last Updated:<meta-pill>5.0.0</meta-pill></div>`);

def('task-strip',`<style>
:host{display:flex;flex:none;height:3px}
i{display:block;height:100%;flex:none}
</style><i style="width:48px;background:#1c1c1e"></i><i style="width:287px;background:#eceef0"></i><i style="width:101px;background:#202124"></i><i style="width:48px;background:#565759"></i><i style="flex:1;background:linear-gradient(90deg,#202124,#2a2620 15%,#1c2530 45%,#1f2a35 60%,#222126)"></i>`);
</script>
</body>
</html>
